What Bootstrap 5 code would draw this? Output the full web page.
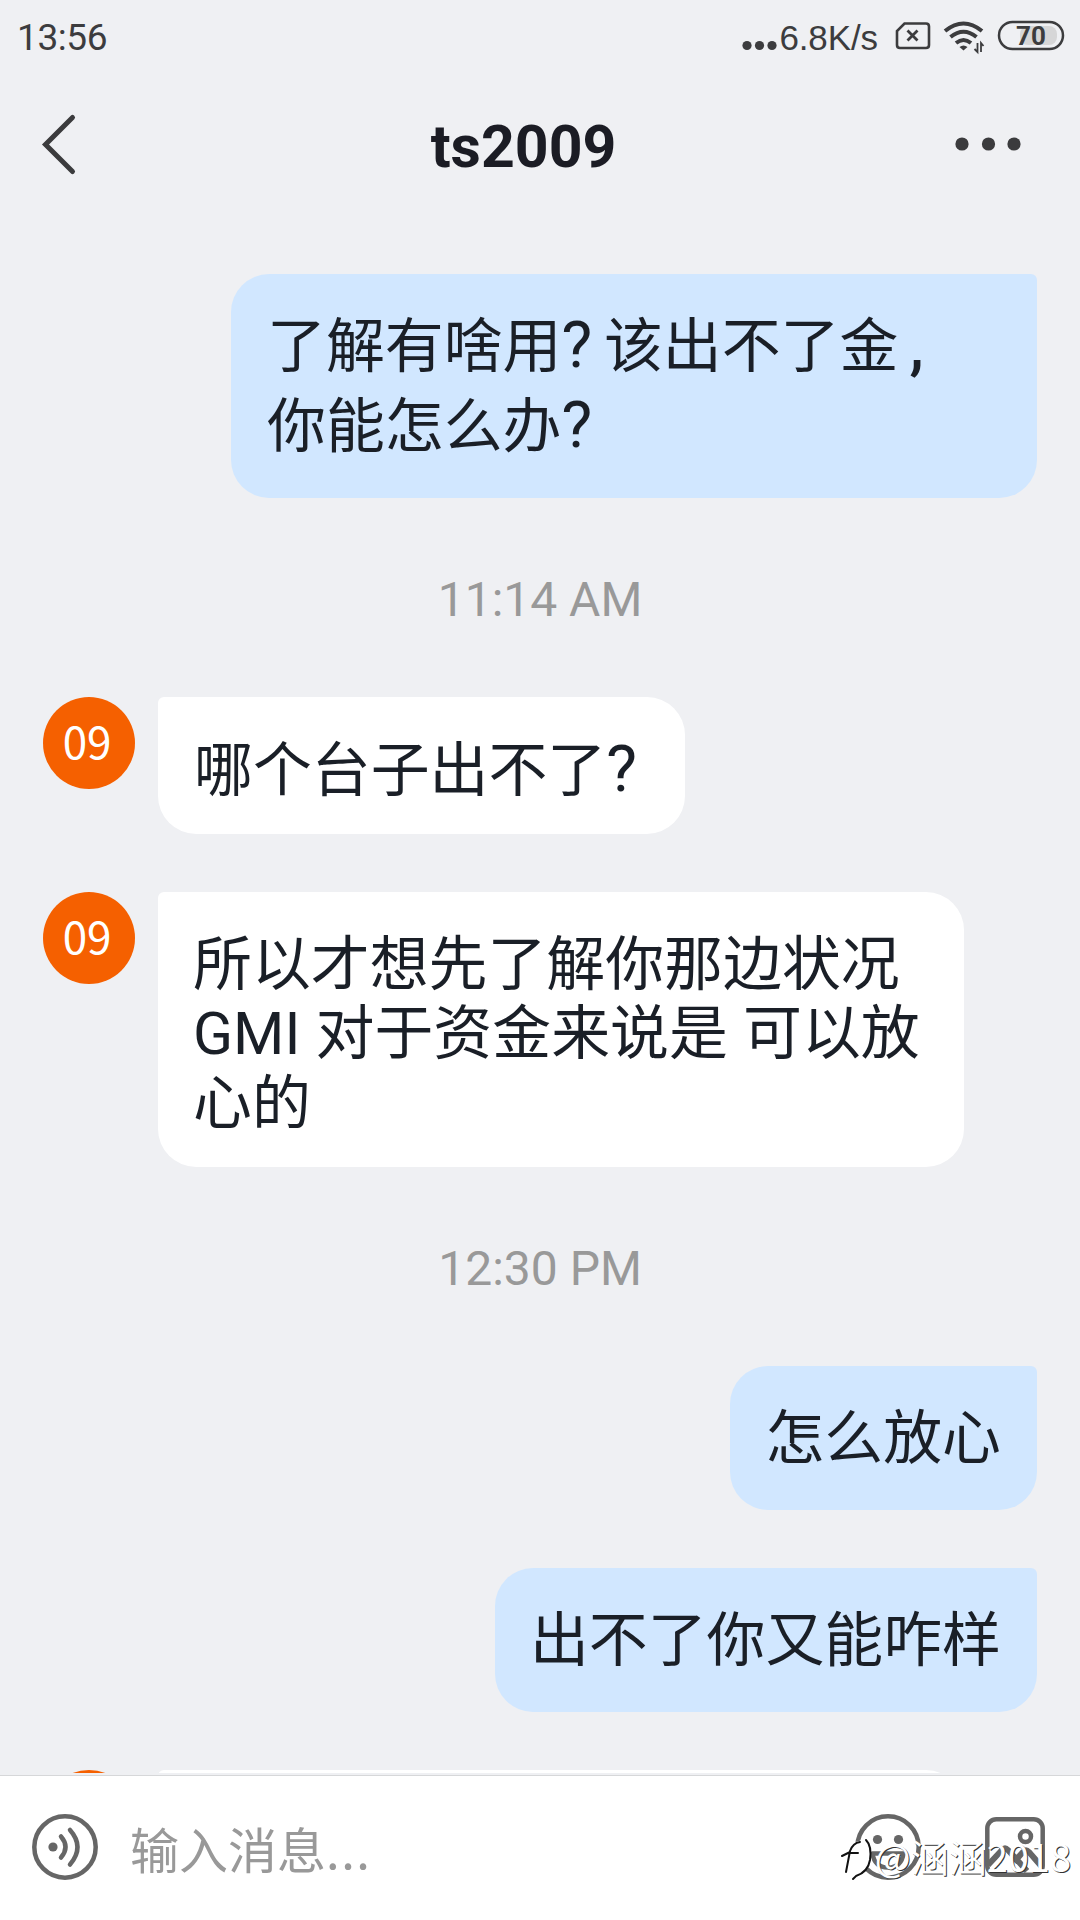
<!DOCTYPE html>
<html lang="zh-CN">
<head>
<meta charset="utf-8">
<meta name="viewport" content="width=device-width, initial-scale=1">
<title>ts2009</title>
<link href="https://cdn.jsdelivr.net/npm/bootstrap@5.3.0/dist/css/bootstrap.min.css" rel="stylesheet">
<style>
body{background:#eff0f3;color:#1b2028;font-family:Roboto,"Noto Sans CJK SC",sans-serif}
.phone{width:1080px;height:1920px}
.statusbar{height:76px;color:#3c3c3e;padding:0 15px 0 17px}
.clock{font:400 37px/76px Roboto,sans-serif;letter-spacing:-.4px}
.speed{font:400 35px/75px "Liberation Sans",sans-serif;letter-spacing:-.1px;margin-left:2px;margin-right:17px}
.titlebar{height:136px;padding:0 59px 0 40px}
.title{font-size:59px;font-weight:700;line-height:141px;color:#1b1c24;margin-left:12px}
.chat{padding:62px 43px 0;height:1561px}
.chat>*{flex-shrink:0}
.bubble{color:#1a1f27;font-family:"Noto Sans CJK SC",sans-serif;font-size:58.9px;white-space:nowrap}
.mine{background:#d1e7ff;border-radius:38px 6px 38px 38px;line-height:80px;padding:28px 36px 36px 35px}
.mine.wide{padding-left:36px}
.theirs{background:#fff;border-radius:6px 38px 38px 38px;line-height:69px;padding:34px 36px 34px 36px;margin-left:23px;word-spacing:2px}
.theirs.wide{padding-top:33px;padding-left:35px}
.wide{width:806px}
.peek{height:100px}
.next-row{margin-top:58px}
.stamp{font-size:48px;line-height:60px;color:#999;margin:72px 0 67px}
.avatar{width:92px;height:92px;background:#f56000;color:#fff;font:400 44px/87px "Noto Sans CJK SC",sans-serif;padding-right:4px;letter-spacing:-.2px}
.q{display:inline-block;width:42.500px;font:400 65px/60px Roboto,sans-serif}
.comma{font:500 64px/60px Roboto,sans-serif;margin-left:11px}
.latin{font:400 58.8px/60px Roboto,sans-serif}
.composer{height:145px;margin-top:2px;background:#fff;border-top:1px solid #d6d7d9;padding:0 35px 2px 32px}
.hint{font:400 49px/72px "Noto Sans CJK SC",sans-serif;color:#999;margin-left:32px;margin-top:1px}
.dots{letter-spacing:1.500px}
.picture-btn{margin-left:64px}
.wm{right:9px;bottom:34px}
.wm-text{color:#fff;font:400 38px/60px "Noto Sans CJK SC",sans-serif;text-shadow:1px 1px 0 #333}
</style>
</head>
<body>
<div class="phone d-flex flex-column position-relative overflow-hidden">
  <div class="statusbar d-flex justify-content-between align-items-start flex-shrink-0">
    <span class="clock">13:56</span>
    <div class="d-flex">
      <svg width="35" height="60" fill="#3c3c3e"><circle cx="5" cy="45.500" r="4.600"/><circle cx="17.500" cy="45.500" r="4.600"/><circle cx="30" cy="45.500" r="4.600"/></svg>
      <span class="speed">6.8K/s</span>
      <svg width="170" height="60" viewBox="895 0 170 60" fill="none" stroke="#3c3c3e">
        <path d="M904.500 23.500H926q3 0 3 3V45q0 3-3 3H900q-3 0-3-3V31z" stroke-width="2.600"/>
        <path d="M907.500 30.500l10 10m0-10l-10 10" stroke-width="2.800"/>
        <path d="M945 31q18.500-15 37 0M950.500 37q13-10.500 26 0M956 43q7.500-6 15 0" stroke-width="4"/>
        <path d="M959.500 47q4-3 8 0l-4 3.500z" fill="#3c3c3e" stroke="none"/>
        <path d="M977.500 43v9l-3-3M981 52v-9l2.500 3" stroke-width="1.800"/>
        <rect x="1020" y="26" width="37" height="19" rx="8" fill="#d6d6d7" stroke="none"/>
        <rect x="999" y="22" width="64" height="27" rx="13.500" stroke-width="2.500"/>
        <text x="1031" y="45" text-anchor="middle" font-family="Roboto" font-weight="700" font-size="26" fill="#3c3c3e" stroke="none">70</text>
      </svg>
    </div>
  </div>
  <div class="titlebar d-flex justify-content-between align-items-start flex-shrink-0">
    <svg width="40" height="136" fill="none" stroke="#3b3b3d" stroke-width="5" stroke-linecap="round"><path d="M32.500 41.500L5.500 68.500L32.500 95.500"/></svg>
    <span class="title">ts2009</span>
    <svg width="66" height="136" fill="#3b3b3d"><circle cx="7" cy="68" r="6.600"/><circle cx="33.500" cy="68" r="6.600"/><circle cx="59" cy="68" r="6.600"/></svg>
  </div>
  <div class="chat d-flex flex-column overflow-hidden flex-shrink-0">
    <div class="bubble mine wide align-self-end">了解有啥用<span class="q">?</span>该出不了金<span class="comma">,</span><br>你能怎么办<span class="q">?</span></div>
    <div class="stamp text-center">11:14 AM</div>
    <div class="d-flex align-items-start"><div class="avatar rounded-circle text-center">09</div><div class="bubble theirs">哪个台子出不了<span class="q">?</span></div></div>
    <div class="next-row d-flex align-items-start"><div class="avatar rounded-circle text-center">09</div><div class="bubble theirs wide">所以才想先了解你那边状况<br><span class="latin">GMI</span> 对于资金来说是 可以放<br>心的</div></div>
    <div class="stamp text-center">12:30 PM</div>
    <div class="bubble mine align-self-end">怎么放心</div>
    <div class="bubble mine align-self-end next-row">出不了你又能咋样</div>
    <div class="next-row d-flex align-items-start"><div class="avatar rounded-circle"></div><div class="bubble theirs wide peek"></div></div>
  </div>
  <div class="composer d-flex align-items-center flex-shrink-0">
    <svg width="66" height="66" fill="none" stroke="#666" stroke-width="4.500" stroke-linecap="round"><circle cx="33" cy="33" r="30.700"/><circle cx="21" cy="33" r="4.600" fill="#666" stroke="none"/><path d="M29 22.500q9 10.500 0 21M38 16q15 17 0 34.500"/></svg>
    <span class="hint">输入消息<span class="dots">...</span></span>
    <svg class="ms-auto" width="66" height="66" fill="none" stroke="#666" stroke-width="4.500"><circle cx="33" cy="33" r="30.700"/><circle cx="22.500" cy="25.500" r="4.600" fill="#666" stroke="none"/><circle cx="43.500" cy="25.500" r="4.600" fill="#666" stroke="none"/><path d="M17.500 39.500h31q-2 14-15.500 14t-15.500-14z" stroke-linejoin="round"/></svg>
    <svg class="picture-btn" width="60" height="60" fill="none" stroke="#666" stroke-width="4.500"><rect x="2.300" y="2.300" width="55.400" height="55.400" rx="9"/><circle cx="40.500" cy="19.500" r="5.500"/><path d="M3 48L17 33q3-3 6 0L42 54M29 45l9-10q3-3 6 0L57 50" stroke-width="6"/></svg>
  </div>
  <div class="wm position-absolute d-flex align-items-center">
    <svg width="35" height="60" viewBox="838 1834 35 60" fill="none" stroke-linecap="round"><path d="M845 1880L848 1855Q854 1847 866 1848Q871 1856 867 1874Q861 1881 849 1885z" fill="#fff"/><path d="M840 1864L848 1860M844 1880L848 1859Q851 1851 858 1850M849 1861H856M864 1848Q870 1854 868 1868Q866 1880 854 1884L851 1887" stroke="#111" stroke-width="2"/></svg>
    <span class="wm-text">@涵涵2018</span>
  </div>
</div>
<script src="https://cdn.jsdelivr.net/npm/bootstrap@5.3.0/dist/js/bootstrap.bundle.min.js"></script>
</body>
</html>
